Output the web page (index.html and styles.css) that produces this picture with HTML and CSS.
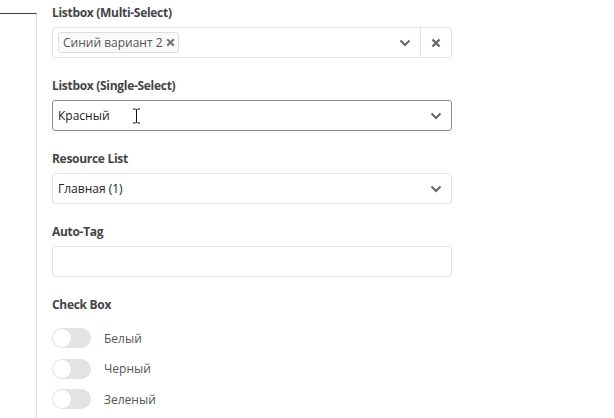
FILE: index.html
```html
<!DOCTYPE html>
<html lang="ru">
<head>
    <meta charset="UTF-8">
    <meta name="viewport" content="width=device-width, initial-scale=1.0">
    <title>Form fields</title>
    <link rel="stylesheet" href="styles.css">
</head>
<body>
    <div class="page">
        <div class="side"></div>

        <div class="form">
            <div class="field">
                <label class="label">Listbox (Multi-Select)</label>
                <div class="box multi">
                    <div class="tags">
                        <span class="tag">Синий вариант 2
                            <svg class="tag-x" width="9" height="9" viewBox="0 0 9 9"><path d="M1.2 1.2 L7.8 7.8 M7.8 1.2 L1.2 7.8" stroke="#777" stroke-width="2.2"/></svg>
                        </span>
                    </div>
                    <span class="chev">
                        <svg width="12" height="8" viewBox="0 0 12 8"><path d="M1.5 1.5 L6 6 L10.5 1.5" fill="none" stroke="#666" stroke-width="2"/></svg>
                    </span>
                    <span class="clear">
                        <svg width="10" height="10" viewBox="0 0 10 10"><path d="M1.5 1.5 L8.5 8.5 M8.5 1.5 L1.5 8.5" stroke="#666" stroke-width="2.4"/></svg>
                    </span>
                </div>
            </div>

            <div class="field">
                <label class="label">Listbox (Single-Select)</label>
                <div class="box focus">
                    <span class="value">Красный</span>
                    <span class="chev">
                        <svg width="12" height="8" viewBox="0 0 12 8"><path d="M1.5 1.5 L6 6 L10.5 1.5" fill="none" stroke="#666" stroke-width="2"/></svg>
                    </span>
                    <svg class="cursor" width="9" height="16" viewBox="0 0 9 16"><path d="M1 1 H3.5 L4.5 2 L5.5 1 H8 M4.5 2 V14 M1 15 H3.5 L4.5 14 L5.5 15 H8" fill="none" stroke="#111" stroke-width="1"/></svg>
                </div>
            </div>

            <div class="field">
                <label class="label">Resource List</label>
                <div class="box">
                    <span class="value">Главная (1)</span>
                    <span class="chev">
                        <svg width="12" height="8" viewBox="0 0 12 8"><path d="M1.5 1.5 L6 6 L10.5 1.5" fill="none" stroke="#666" stroke-width="2"/></svg>
                    </span>
                </div>
            </div>

            <div class="field">
                <label class="label">Auto-Tag</label>
                <div class="box"></div>
            </div>

            <div class="field">
                <label class="label">Check Box</label>
                <div class="checks">
                    <div class="check"><span class="toggle"></span>Белый</div>
                    <div class="check"><span class="toggle"></span>Черный</div>
                    <div class="check"><span class="toggle"></span>Зеленый</div>
                </div>
            </div>
        </div>
    </div>
</body>
</html>
```

FILE: styles.css
```css
*{
    margin: 0;
    padding: 0;
    box-sizing: border-box;
}
body{
    background: #fff;
    font-family: "Open Sans", "Liberation Sans", sans-serif;
    font-size: 12px;
    color: #333;
}
.page{
    display: flex;
    height: 418px;
}

/* левая колонка */
.side{
    width: 37px;
    margin-top: 13px;
    border-top: 1px solid #2f4256;
    border-right: 1px solid #dcdcdc;
}

.form{
    width: 400px;
    margin-left: 15px;
    padding-top: 4px;
}
.field{
    margin-bottom: 19px;
}
.label{
    display: block;
    height: 18px;
    line-height: 18px;
    margin-bottom: 5px;
    font-size: 12px;
    font-weight: 700;
    letter-spacing: -0.3px;
    color: #444;
}

/* поле */
.box{
    position: relative;
    display: flex;
    align-items: center;
    height: 31px;
    border: 1px solid #e2e2e2;
    border-radius: 3px;
    padding-left: 5px;
}
.box.focus{
    border-color: #8d8d8d;
}
.value{
    flex: 1;
    color: #222;
}
.chev{
    display: flex;
    align-items: center;
    justify-content: center;
    width: 30px;
    height: 100%;
}

.multi .tags{
    flex: 1;
}
.tag{
    display: inline-flex;
    align-items: center;
    height: 21px;
    padding: 0 3px 0 4px;
    border: 1px solid #dedede;
    border-radius: 3px;
    background: #fafafa;
    color: #555;
}
.tag-x{
    margin-left: 3px;
}
.clear{
    display: flex;
    align-items: center;
    justify-content: center;
    width: 31px;
    height: 100%;
    border-left: 1px solid #e2e2e2;
}

/* курсор мыши */
.cursor{
    position: absolute;
    left: 79px;
    top: 7px;
}

/* переключатели */
.checks{
    padding-top: 4px;
}
.check{
    display: flex;
    align-items: center;
    height: 30.5px;
    color: #555;
}
.toggle{
    position: relative;
    width: 39px;
    height: 20px;
    margin-right: 13px;
    border-radius: 10px;
    background: #e3e3e3;
}
.toggle::after{
    content: "";
    position: absolute;
    left: 1px;
    top: 1px;
    width: 18px;
    height: 18px;
    border-radius: 50%;
    background: #fff;
}
```
